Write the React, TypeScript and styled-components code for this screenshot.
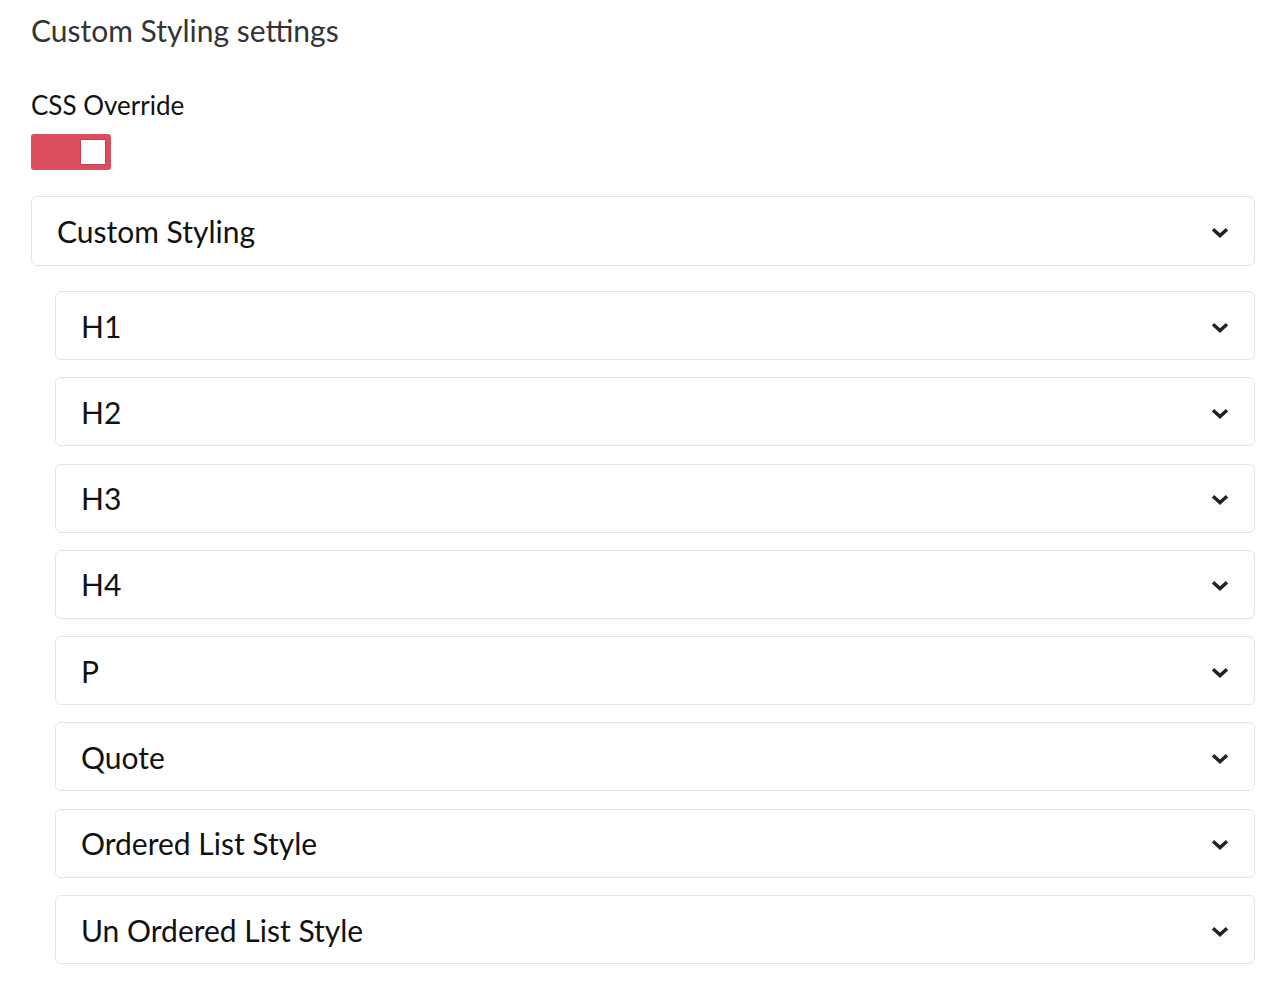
import React, { useState } from "react";
import styled, { createGlobalStyle } from "styled-components";

const GlobalStyle = createGlobalStyle`
  body {
    margin: 0;
    background: #fff;
    font-family: Lato, "Open Sans", sans-serif;
    color: #111;
  }
`;

const sections = [
  "H1",
  "H2",
  "H3",
  "H4",
  "P",
  "Quote",
  "Ordered List Style",
  "Un Ordered List Style",
];

const Chevron = () => (
  <svg width="18" height="11" viewBox="0 0 18 11">
    <polyline
      points="2,2.2 9,8.6 16,2.2"
      fill="none"
      stroke="#222"
      strokeWidth="3.4"
      strokeLinejoin="miter"
    />
  </svg>
);

const Panel: React.FC<{ title: string; nested?: boolean }> = ({
  title,
  nested,
}) => {
  return (
    <PanelHead nested={nested}>
      <span>{title}</span>
      <Chevron />
    </PanelHead>
  );
};

export default function App() {
  const [on, setOn] = useState(true);
  return (
    <>
      <GlobalStyle />
      <Page>
        <Title>Custom Styling settings</Title>
        <Label>CSS Override</Label>
        <Toggle on={on} onClick={() => setOn(!on)}>
          <Knob />
        </Toggle>
        <Panel title="Custom Styling" />
        <List>
          {sections.map((s) => (
            <Panel key={s} title={s} nested />
          ))}
        </List>
      </Page>
    </>
  );
}

const Page = styled.div`
  width: 1224px;
  padding: 13px 0 40px 31px;
  display: flex;
  flex-direction: column;
`;

const Title = styled.h3`
  margin: 0;
  font-size: 30px;
  font-weight: 400;
  line-height: 34px;
  color: #343434;
`;

const Label = styled.div`
  margin-top: 43px;
  font-size: 26px;
  line-height: 30px;
  color: #111;
`;

const Toggle = styled.button<{ on: boolean }>`
  margin-top: 14px;
  width: 80px;
  height: 36px;
  padding: 0 5px;
  border: none;
  border-radius: 3px;
  background: ${({ on }) => (on ? "#dc4d5f" : "#ccc")};
  display: flex;
  align-items: center;
  justify-content: ${({ on }) => (on ? "flex-end" : "flex-start")};
  cursor: pointer;
`;

const Knob = styled.span`
  width: 26px;
  height: 26px;
  box-sizing: border-box;
  background: #fff;
  border: 1px solid #c8404f;
`;

const PanelHead = styled.div<{ nested?: boolean }>`
  margin-top: ${({ nested }) => (nested ? "0" : "26px")};
  height: ${({ nested }) => (nested ? "69px" : "70px")};
  box-sizing: border-box;
  border: 1.5px solid #e4e4e4;
  border-radius: 6px;
  padding: 0 25px 0 25px;
  display: flex;
  align-items: center;
  justify-content: space-between;
  font-size: 30px;
  color: #111;

  svg {
    margin-top: 3px;
  }
`;

const List = styled.div`
  margin: 25px 0 0 24px;
  display: flex;
  flex-direction: column;
  gap: 17.3px;
`;
